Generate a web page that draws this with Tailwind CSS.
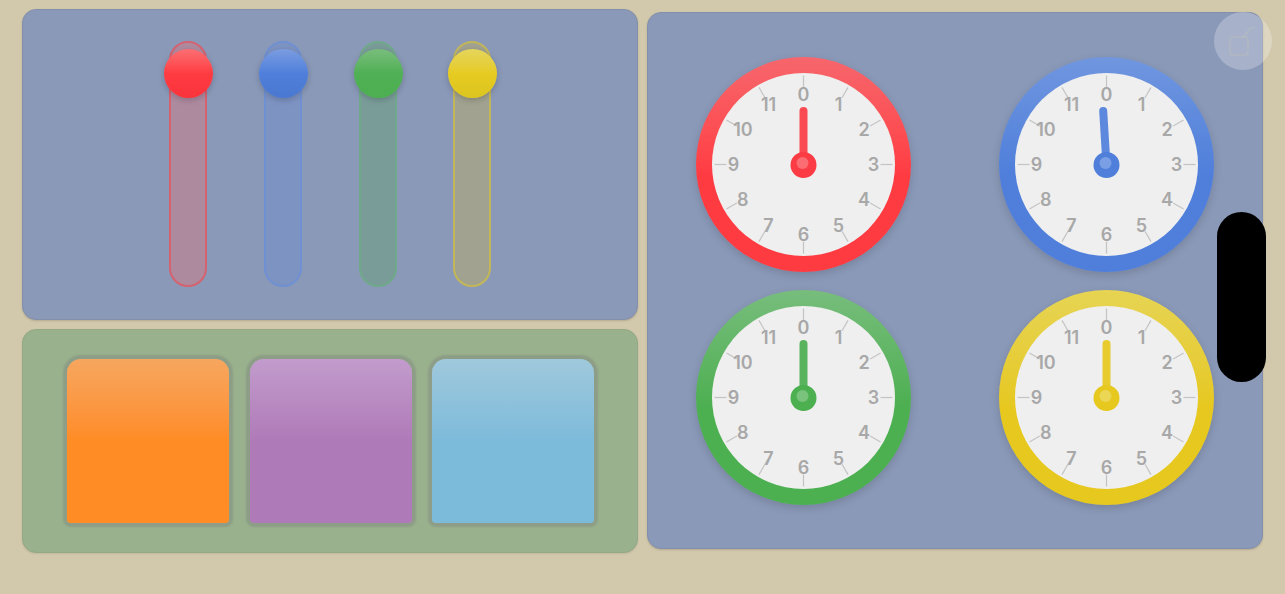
<!DOCTYPE html>
<html lang="en">
<head>
  <meta charset="UTF-8">
  <title>Sliders and Clocks</title>
  <script src="https://cdn.jsdelivr.net/npm/@tailwindcss/browser@4"></script>
</head>
<body class="bg-[#d2c8ac] h-[594px] overflow-hidden relative font-['Inter',sans-serif]">

  <div class="flex items-start pl-[22px]">
    <!-- left column -->
    <div class="w-[616px] pt-[9px] flex flex-col gap-[9px]">
      <div class="h-[311px] rounded-[14px] bg-[#8a99b8] border border-[#8490ab] shadow-[0_1px_2px_rgba(0,0,0,0.15)] flex justify-center gap-[56.7px] pt-[31px] pl-[0.5px]">
        <div class="relative w-[38px] h-[246px] rounded-full border-2 border-[#d5626f] bg-[#ae8a9f]">
          <div class="absolute left-[-7px] top-[6px] w-[49px] h-[49px] rounded-full bg-linear-to-b from-[#fb6d72] via-[#ff3b42] to-[#fa333b] shadow-[0_2px_6px_rgba(0,0,0,0.2)]"></div>
        </div>
        <div class="relative w-[38px] h-[246px] rounded-full border-2 border-[#6f90d2] bg-[#7d93c2]">
          <div class="absolute left-[-7px] top-[6px] w-[49px] h-[49px] rounded-full bg-linear-to-b from-[#7b9ce0] via-[#4f7fdb] to-[#4a78d0] shadow-[0_2px_6px_rgba(0,0,0,0.2)]"></div>
        </div>
        <div class="relative w-[38px] h-[246px] rounded-full border-2 border-[#6fa98a] bg-[#7a9c99]">
          <div class="absolute left-[-7px] top-[6px] w-[49px] h-[49px] rounded-full bg-linear-to-b from-[#79bd7c] via-[#4fb055] to-[#4caf50] shadow-[0_2px_6px_rgba(0,0,0,0.2)]"></div>
        </div>
        <div class="relative w-[38px] h-[246px] rounded-full border-2 border-[#c3b658] bg-[#a1a28f]">
          <div class="absolute left-[-7px] top-[6px] w-[49px] h-[49px] rounded-full bg-linear-to-b from-[#e5d55a] via-[#e6cb20] to-[#dcc520] shadow-[0_2px_6px_rgba(0,0,0,0.2)]"></div>
        </div>
      </div>

      <div class="h-[224px] rounded-[14px] bg-[#99b18c] border border-[#93a986] shadow-[0_1px_2px_rgba(0,0,0,0.08)] flex justify-center gap-[20.5px] pt-[29px] pl-[1px]">
        <div class="w-[162px] h-[164px] rounded-t-[14px] rounded-b-[4px] bg-linear-to-b from-[#f6a65e] to-[#ff8c24] to-50% shadow-[0_0_2px_4px_#8d9d87]"></div>
        <div class="w-[162px] h-[164px] rounded-t-[14px] rounded-b-[4px] bg-linear-to-b from-[#c29ccc] to-[#af7ab8] to-50% shadow-[0_0_2px_4px_#8d9d87]"></div>
        <div class="w-[162px] h-[164px] rounded-t-[14px] rounded-b-[4px] bg-linear-to-b from-[#9fc8dc] to-[#7dbbda] to-50% shadow-[0_0_2px_4px_#8d9d87]"></div>
      </div>
    </div>

    <!-- right panel -->
    <div class="ml-[9px] mt-[12px] w-[616px] h-[537px] rounded-[14px] bg-[#8a99b8] border border-[#8490ab] shadow-[0_1px_2px_rgba(0,0,0,0.15)] pt-[44px]">
      <div id="clocks" class="grid grid-cols-[215px_215px] justify-center gap-x-[88px] gap-y-[18px]"></div>
    </div>
  </div>

  <!-- floating bits over the page -->
  <div class="absolute left-[1214px] top-[12px] w-[58px] h-[58px] rounded-full bg-white/25">
    <svg width="58" height="58" viewBox="0 0 58 58" fill="none" stroke="#c8c6ae" stroke-opacity="0.3" stroke-width="1.5">
      <rect x="16" y="25" width="18" height="18" rx="3"/>
      <path d="M29 25 L36 17 L41 15"/>
    </svg>
  </div>
  <div class="absolute left-[1217px] top-[212px] w-[49px] h-[170px] rounded-full bg-black"></div>

  <script>
    const clocks = [
      { ring: 'bg-linear-to-b from-[#f6666c] to-[#ff3b42] to-55%', fill: '#fb3c44', angle: 0 },
      { ring: 'bg-linear-to-b from-[#7096df] to-[#4f7fdb] to-55%', fill: '#4f7fdb', angle: -3.5 },
      { ring: 'bg-linear-to-b from-[#77bd7c] to-[#4caf50] to-55%', fill: '#4caf50', angle: 0 },
      { ring: 'bg-linear-to-b from-[#e6d452] to-[#e6c81e] to-55%', fill: '#e6c81e', angle: 0 }
    ];

    function clockFace(fill, angle) {
      let marks = '';
      for (let n = 0; n < 12; n++) {
        const a = n * Math.PI / 6;
        const sin = Math.sin(a), cos = Math.cos(a);
        const inner = n === 7 ? 71 : 77;
        marks += `<line x1="${107.5 + 89 * sin}" y1="${107.5 - 89 * cos}" x2="${107.5 + inner * sin}" y2="${107.5 - inner * cos}" stroke="#c4c4c4" stroke-width="1.2"/>`;
        marks += `<text x="${107.5 + 70 * sin}" y="${108 - 70 * cos}" dy="0.36em" text-anchor="middle" font-size="18" font-weight="600" fill="#a8a8a8">${n}</text>`;
      }
      return `<svg class="absolute inset-0" width="215" height="215" viewBox="0 0 215 215">
        ${marks}
        <rect x="103.5" y="50" width="8" height="58" rx="4" fill="${fill}" fill-opacity="0.92" transform="rotate(${angle} 107.5 108)"/>
        <circle cx="107.5" cy="108" r="13" fill="${fill}"/>
        <circle cx="106.5" cy="106" r="6" fill="#fff" fill-opacity="0.25"/>
      </svg>`;
    }

    document.getElementById('clocks').innerHTML = clocks.map(c => `
      <div class="relative w-[215px] h-[215px] rounded-full p-[16px] shadow-[0_3px_8px_rgba(0,0,0,0.15)] ${c.ring}">
        <div class="w-full h-full rounded-full bg-[#efefef]"></div>
        ${clockFace(c.fill, c.angle)}
      </div>`).join('');
  </script>

</body>
</html>
